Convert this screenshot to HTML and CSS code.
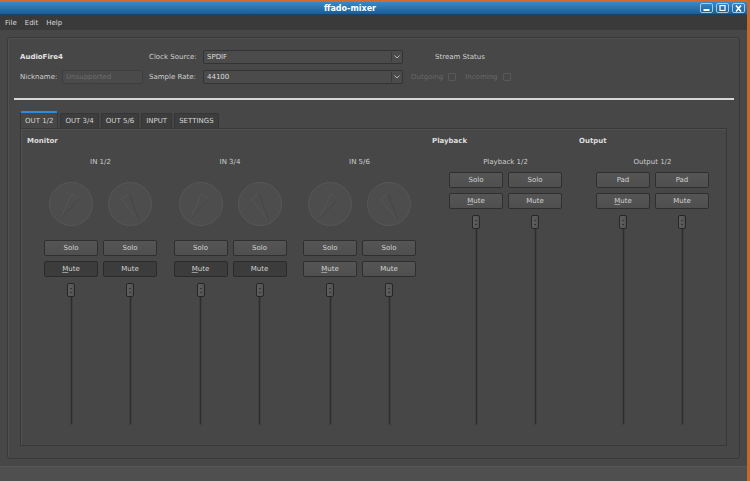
FILE: index.html
```html
<!doctype html>
<html lang="en">
  <head>
    <meta charset="utf-8">
    <title>ffado-mixer</title>
    <link rel="stylesheet" href="styles.css">
  </head>
  <body>
    <svg class="defs" width="0" height="0">
      <symbol id="knob_l" viewBox="0 0 44 44">
        <circle cx="22" cy="22" r="21.5" fill="#4d4d4d" stroke="#575757" stroke-width="1"/>
        <polygon points="11.7,36.3 22.7,12 30.3,17" fill="none" stroke="#5a5a5a" stroke-width="0.6"/>
        <line x1="11.7" y1="36.3" x2="30.3" y2="17" stroke="#3c3c3c" stroke-width="0.7"/>
      </symbol>
      <symbol id="knob_r" viewBox="0 0 44 44">
        <circle cx="22" cy="22" r="21.5" fill="#4d4d4d" stroke="#575757" stroke-width="1"/>
        <polygon points="31,38.7 13,17 21.3,12" fill="none" stroke="#5a5a5a" stroke-width="0.6"/>
        <line x1="31" y1="38.7" x2="21.3" y2="12" stroke="#3c3c3c" stroke-width="0.7"/>
      </symbol>
    </svg>

    <div class="window">
      <div class="titlebar">
        <div class="title">ffado-mixer</div>
        <div class="wbtns">
          <div class="wbtn"><svg width="9" height="6"><rect x="1.5" y="4" width="6" height="2" fill="#fff"/></svg></div>
          <div class="wbtn"><svg width="9" height="6"><rect x="2" y="0.5" width="5" height="5" fill="none" stroke="#fff" stroke-width="1.2"/></svg></div>
          <div class="wbtn"><svg width="9" height="7"><path d="M2 0.5 L7 6.5 M7 0.5 L2 6.5" stroke="#fff" stroke-width="1.6"/></svg></div>
        </div>
      </div>

      <div class="menubar">
        <span>File</span>
        <span>Edit</span>
        <span>Help</span>
      </div>

      <div class="main">
        <div class="frame">
          <div class="device">
            <div class="devname">AudioFire4</div>
            <div class="lbl">Clock Source:</div>
            <div class="combo"><span class="val">SPDIF</span><span class="arrow"><svg width="6" height="4"><polyline points="0.5,0.5 3,3 5.5,0.5" fill="none" stroke="#b8b8b8" stroke-width="1"/></svg></span></div>
            <div class="stream">Stream Status</div>

            <div class="lbl">Nickname:</div>
            <div><div class="nick">Unsupported</div></div>
            <div class="lbl">Sample Rate:</div>
            <div class="combo"><span class="val">44100</span><span class="arrow"><svg width="6" height="4"><polyline points="0.5,0.5 3,3 5.5,0.5" fill="none" stroke="#b8b8b8" stroke-width="1"/></svg></span></div>
            <div class="flags">Outgoing<span class="cb"></span>Incoming<span class="cb"></span></div>
          </div>

          <div class="rule"></div>

          <div class="tabs">
            <div class="tab active">OUT 1/2</div>
            <div class="tab">OUT 3/4</div>
            <div class="tab">OUT 5/6</div>
            <div class="tab">INPUT</div>
            <div class="tab">SETTINGS</div>
          </div>

          <div class="panel">
            <!-- monitor mixes -->
            <div class="section monitor">
              <div class="sec_title">Monitor</div>
              <div class="groups">
                <div class="group">
                  <div class="glabel">IN 1/2</div>
                  <div class="strips">
                    <div class="strip">
                      <svg class="knob"><use href="#knob_l"/></svg>
                      <div class="btn">Solo</div>
                      <div class="btn mute on"><u>M</u>ute</div>
                      <div class="slider"><div class="handle"></div><div class="track"></div></div>
                    </div>
                    <div class="strip">
                      <svg class="knob"><use href="#knob_r"/></svg>
                      <div class="btn">Solo</div>
                      <div class="btn mute on">Mute</div>
                      <div class="slider"><div class="handle"></div><div class="track"></div></div>
                    </div>
                  </div>
                </div>
                <div class="group">
                  <div class="glabel">IN 3/4</div>
                  <div class="strips">
                    <div class="strip">
                      <svg class="knob"><use href="#knob_l"/></svg>
                      <div class="btn">Solo</div>
                      <div class="btn mute on"><u>M</u>ute</div>
                      <div class="slider"><div class="handle"></div><div class="track"></div></div>
                    </div>
                    <div class="strip">
                      <svg class="knob"><use href="#knob_r"/></svg>
                      <div class="btn">Solo</div>
                      <div class="btn mute on">Mute</div>
                      <div class="slider"><div class="handle"></div><div class="track"></div></div>
                    </div>
                  </div>
                </div>
                <div class="group">
                  <div class="glabel">IN 5/6</div>
                  <div class="strips">
                    <div class="strip">
                      <svg class="knob"><use href="#knob_l"/></svg>
                      <div class="btn">Solo</div>
                      <div class="btn mute"><u>M</u>ute</div>
                      <div class="slider"><div class="handle"></div><div class="track"></div></div>
                    </div>
                    <div class="strip">
                      <svg class="knob"><use href="#knob_r"/></svg>
                      <div class="btn">Solo</div>
                      <div class="btn mute">Mute</div>
                      <div class="slider"><div class="handle"></div><div class="track"></div></div>
                    </div>
                  </div>
                </div>
              </div>
            </div>

            <!-- playback -->
            <div class="section playback">
              <div class="sec_title">Playback</div>
              <div class="groups">
                <div class="group">
                  <div class="glabel">Playback 1/2</div>
                  <div class="strips">
                    <div class="strip">
                      <div class="btn">Solo</div>
                      <div class="btn mute"><u>M</u>ute</div>
                      <div class="slider"><div class="handle"></div><div class="track"></div></div>
                    </div>
                    <div class="strip">
                      <div class="btn">Solo</div>
                      <div class="btn mute">Mute</div>
                      <div class="slider"><div class="handle"></div><div class="track"></div></div>
                    </div>
                  </div>
                </div>
              </div>
            </div>

            <!-- output -->
            <div class="section output">
              <div class="sec_title">Output</div>
              <div class="groups">
                <div class="group">
                  <div class="glabel">Output 1/2</div>
                  <div class="strips">
                    <div class="strip">
                      <div class="btn">Pad</div>
                      <div class="btn mute"><u>M</u>ute</div>
                      <div class="slider"><div class="handle"></div><div class="track"></div></div>
                    </div>
                    <div class="strip">
                      <div class="btn">Pad</div>
                      <div class="btn mute">Mute</div>
                      <div class="slider"><div class="handle"></div><div class="track"></div></div>
                    </div>
                  </div>
                </div>
              </div>
            </div>
          </div>
        </div>
      </div>

      <div class="status"></div>
    </div>
  </body>
</html>
```

FILE: styles.css
```css
* {
  box-sizing: border-box;
}

body {
  margin: 0;
  width: 750px;
  height: 481px;
  overflow: hidden;
  background-color: #474747;
  font-family: "DejaVu Sans", "Liberation Sans", sans-serif;
  font-size: 7px;
  color: #d4d4d4;
}

.defs {
  position: absolute;
}

.window {
  display: flex;
  flex-direction: column;
  height: 481px;
  border-right: 3px solid #c8662c;
}

/* title bar */
.titlebar {
  flex: none;
  height: 15px;
  display: flex;
  align-items: center;
  border-top: 2px solid #d06a2e;
  border-bottom: 1px solid #14436c;
  background: linear-gradient(#3689c9, #1b5d96);
}
.title {
  flex: 1;
  text-align: center;
  font-weight: bold;
  font-size: 8px;
  color: #ffffff;
}
.wbtns {
  display: flex;
  gap: 3px;
  padding-right: 2px;
}
.wbtn {
  width: 13px;
  height: 10px;
  border: 1px solid #a6c9e6;
  border-radius: 2px;
  background: linear-gradient(#3485c5, #1d5f99);
  display: flex;
  align-items: center;
  justify-content: center;
}
.wbtn svg {
  display: block;
}

.menubar {
  flex: none;
  height: 15px;
  display: flex;
  align-items: center;
  gap: 8px;
  padding-left: 5px;
  background-color: #3a3a3a;
  color: #d8d8d8;
}

.main {
  flex: 1;
  padding: 7px 7px 0 7px;
}

.frame {
  height: 422px;
  border: 1px solid #393939;
  border-radius: 3px;
  box-shadow: inset 1px 1px 0 #515151;
  padding-top: 12px;
}

/* device header */
.device {
  display: grid;
  grid-template-columns: 42px 87px 54px 200px auto;
  grid-template-rows: 14px 14px;
  row-gap: 6px;
  align-items: center;
  margin-left: 12px;
}
.devname {
  grid-column: 1 / 3;
  font-weight: bold;
  color: #e2e2e2;
}
.lbl {
  color: #d0d0d0;
}
.combo {
  height: 14px;
  display: flex;
  align-items: center;
  padding-left: 3px;
  border: 1px solid #333333;
  border-radius: 2px;
  background-color: #4b4b4b;
  color: #dcdcdc;
}
.combo .val {
  flex: 1;
}
.combo .arrow {
  width: 11px;
  height: 10px;
  display: flex;
  align-items: center;
  justify-content: center;
  border-left: 1px solid #3a3a3a;
}
.combo svg {
  display: block;
}
.nick {
  width: 81px;
  height: 14px;
  display: flex;
  align-items: center;
  padding-left: 3px;
  border: 1px solid #3e3e3e;
  border-radius: 2px;
  background-color: #4a4a4a;
  color: #6e6e6e;
}
.stream {
  padding-left: 32px;
  color: #d0d0d0;
}
.flags {
  display: flex;
  align-items: center;
  padding-left: 8px;
  color: #676767;
}
.cb {
  width: 8px;
  height: 8px;
  margin: 0 9px 0 5px;
  border: 1px solid #585858;
  border-radius: 1px;
}

.rule {
  height: 2px;
  margin: 14px 5px 0 6px;
  background-color: #d6d6d6;
}

/* tabs */
.tabs {
  height: 17px;
  margin: 11px 0 0 12px;
  display: flex;
  align-items: flex-end;
  gap: 2px;
}
.tab {
  height: 15px;
  padding: 0 4px;
  display: flex;
  align-items: center;
  background-color: #3d3d3d;
  border: 1px solid #363636;
  border-bottom: none;
  border-radius: 2px 2px 0 0;
  color: #d6d6d6;
}
.tab.active {
  height: 17px;
  background-color: #474747;
  border-top: 2px solid #2a8ee0;
}

.panel {
  width: 707px;
  height: 318px;
  margin-left: 12px;
  display: flex;
  padding: 8px 0 20px 6px;
  border: 1px solid #383838;
  box-shadow: inset 1px 1px 0 #515151;
}

.section {
  display: flex;
  flex-direction: column;
}
.monitor {
  width: 405px;
}
.playback {
  width: 147px;
}
.sec_title {
  line-height: 9px;
  font-weight: bold;
  color: #dedede;
}
.groups {
  flex: 1;
  display: flex;
  gap: 16.5px;
  margin-top: 12px;
  padding-left: 17px;
}
.group {
  width: 113px;
  display: flex;
  flex-direction: column;
}
.glabel {
  line-height: 9px;
  text-align: center;
  color: #cdcdcd;
}
.strips {
  flex: 1;
  display: flex;
  gap: 5px;
  margin-top: 5px;
}
.monitor .strips {
  margin-top: 15px;
}
.strip {
  width: 54px;
  display: flex;
  flex-direction: column;
  align-items: center;
}

.knob {
  width: 44px;
  height: 44px;
  margin-bottom: 14px;
}

.btn {
  width: 54px;
  height: 16px;
  margin-bottom: 5px;
  display: flex;
  align-items: center;
  justify-content: center;
  background: linear-gradient(#555555, #4f4f4f);
  border: 1px solid #2f2f2f;
  border-radius: 2px;
  color: #d2d2d2;
}
.btn.mute {
  margin-bottom: 6px;
}
.btn.on {
  background: #3c3c3c;
  border-color: #2b2b2b;
}
.btn u {
  text-decoration-color: #9a9a9a;
}

/* faders */
.slider {
  flex: 1;
  display: flex;
  flex-direction: column;
  align-items: center;
}
.handle {
  width: 8px;
  height: 14px;
  display: flex;
  align-items: center;
  justify-content: center;
  background: linear-gradient(90deg, #5e5e5e, #535353);
  border: 1px solid #262626;
  border-radius: 2px;
}
.handle::before {
  content: "";
  width: 2px;
  height: 3px;
  border-top: 1px solid #353535;
  border-bottom: 1px solid #353535;
}
.track {
  flex: 1;
  width: 3px;
  background-color: #2e2e2e;
  border: 1px solid #3f3f3f;
  border-top: none;
  border-radius: 0 0 2px 2px;
}

.status {
  flex: none;
  height: 15px;
  background-color: #4f4f4f;
  border-top: 1px solid #575757;
}
```
